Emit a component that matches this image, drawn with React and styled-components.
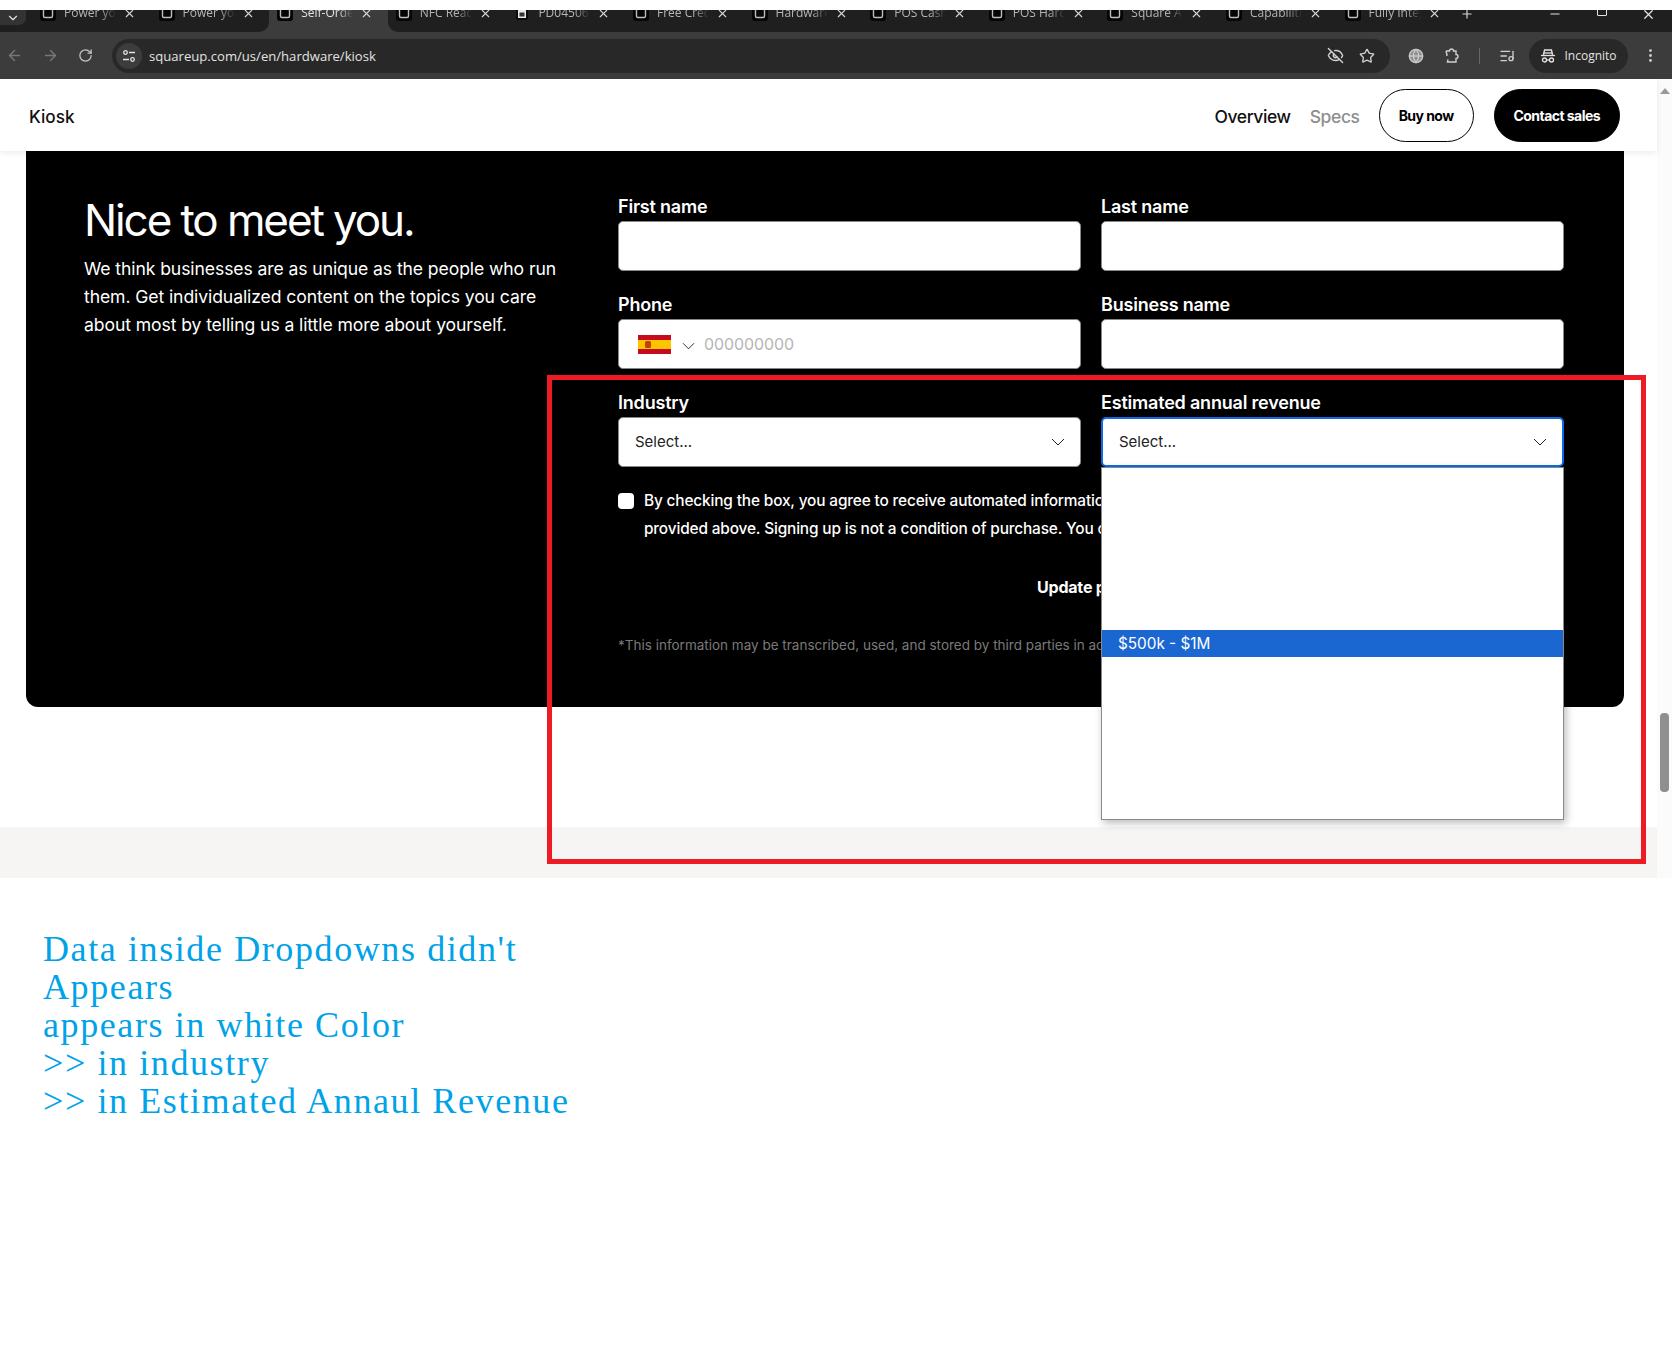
import styled, { createGlobalStyle } from 'styled-components';
import { ArrowLeft, ArrowRight, RotateCw, EyeOff, Star, X, Minus, Plus, EllipsisVertical, ChevronDown, ListMusic, Globe } from 'lucide-react';

const TABS = [
  'Power your',
  'Power your',
  'Self-Ordering',
  'NFC Reader',
  'PD04506_rev',
  'Free Credit',
  'Hardware',
  'POS Cash',
  'POS Hardware',
  'Square App',
  'Capabilities',
  'Fully Integrated',
];
const ACTIVE_TAB = 2;
const OPTION_ROWS = 13;
const HIGHLIGHTED_ROW = 6;

const GlobalStyle = createGlobalStyle`
  html, body {
    margin: 0;
    padding: 0;
    background: #fff;
  }
  body {
    font-family: Inter, "Liberation Sans", sans-serif;
  }
  * {
    box-sizing: border-box;
  }
`;

function Chevron({ width = 14 }) {
  return (
    <svg width={width} height="8" viewBox="0 0 14 8" fill="none" stroke="#222" strokeWidth="1">
      <path d="M1 1l6 6 6-6" />
    </svg>
  );
}

function SquareLogo() {
  return (
    <svg width="16" height="16" viewBox="0 0 16 16">
      <rect width="16" height="16" rx="3" fill="#050505" />
      <rect x="3.5" y="3.5" width="9" height="9" rx="1.5" fill="none" stroke="#bdbdbd" strokeWidth="1.4" />
    </svg>
  );
}

function DocIcon() {
  return (
    <svg width="16" height="16" viewBox="0 0 16 16">
      <rect x="2" width="12" height="15" rx="2" fill="#0a0a0a" />
      <rect x="4" y="2" width="8" height="11" fill="#e8e8e8" />
      <rect x="5.500" y="7.500" width="5" height="4" fill="#333" />
    </svg>
  );
}

function SiteSliders() {
  return (
    <svg width="14" height="14" viewBox="0 0 14 14" fill="none" stroke="#e3e3e3" strokeWidth="1.3">
      <circle cx="3.5" cy="3.5" r="1.8" />
      <path d="M7 3.5h6M1 10.5h6" />
      <circle cx="10.5" cy="10.5" r="1.8" />
    </svg>
  );
}

function ExtensionIcon() {
  return (
    <svg width="18" height="18" viewBox="0 0 18 18" fill="none" stroke="#d0d0d0" strokeWidth="1.4">
      <path d="M3 4h3.5a2 2 0 0 1 4 0H13v3.5a2 2 0 0 1 0 4V15H4.500l.5-2.500" />
      <path d="M3 4l1 4-1 0" />
    </svg>
  );
}

function IncognitoIcon() {
  return (
    <svg width="16" height="16" viewBox="0 0 16 16" fill="none" stroke="#e3e3e3" strokeWidth="1.3">
      <path d="M3.500 7l1-5h7l1 5" />
      <path d="M1 7.500h14" />
      <path d="M3.500 5h9" />
      <circle cx="4.500" cy="12" r="2" />
      <circle cx="11.500" cy="12" r="2" />
      <path d="M6.500 12h3" />
    </svg>
  );
}

function SpainFlag() {
  return (
    <svg width="33" height="19" viewBox="0 0 33 19">
      <rect width="33" height="19" fill="#c60b1e" />
      <rect y="5" width="33" height="9" fill="#ffc400" />
      <rect x="7" y="6" width="6" height="7" rx="1.5" fill="#ad1519" opacity="0.75" />
    </svg>
  );
}

export default function App() {
  return (
    <Root>
      <GlobalStyle />
      <Browser>
        <TabStrip>
          <TabMenuSlot>
            <TabMenu>
              <ChevronDown size={14} color="#e3e3e3" />
            </TabMenu>
          </TabMenuSlot>
          {TABS.map((title, i) => (
            <Tab
              key={i}
              $active={i === ACTIVE_TAB}
              $roundRight={i === ACTIVE_TAB - 1}
              $roundLeft={i === ACTIVE_TAB + 1}
            >
              {i === 4 ? <DocIcon /> : <SquareLogo />}
              <TabTitle>{title}</TabTitle>
              <X size={13} color="#d8d8d8" />
            </Tab>
          ))}
          <TabRest>
            <Plus size={14} color="#d8d8d8" />
            <WindowControls>
              <Minus size={14} color="#e3e3e3" />
              <RestoreBox />
              <X size={15} color="#e3e3e3" />
            </WindowControls>
          </TabRest>
        </TabStrip>

        <Toolbar>
          <NavIcons>
            <ArrowLeft size={17} color="#777" />
            <ArrowRight size={17} color="#777" />
            <RotateCw size={15} color="#c7c7c7" />
          </NavIcons>
          <AddressBar>
            <SiteInfo>
              <SiteSliders />
            </SiteInfo>
            <UrlText>squareup.com/us/en/hardware/kiosk</UrlText>
            <AddressIcons>
              <EyeOff size={17} color="#d0d0d0" />
              <Star size={16} color="#d0d0d0" />
            </AddressIcons>
          </AddressBar>
          <ToolIcons>
            <Globe size={16} color="#c9c9c9" fill="#8f8f8f" />
            <ExtensionIcon />
            <ToolDivider />
            <ListMusic size={16} color="#d0d0d0" />
          </ToolIcons>
          <IncognitoPill>
            <IncognitoIcon />
            Incognito
          </IncognitoPill>
          <MenuSlot>
            <EllipsisVertical size={17} color="#d0d0d0" />
          </MenuSlot>
        </Toolbar>

        <PageView>
          <PageContent>
            <NavBar>
              <ProductName>Kiosk</ProductName>
              <NavRight>
                <NavLink>Overview</NavLink>
                <NavLink $muted>Specs</NavLink>
                <PillButton>Buy now</PillButton>
                <PillButton $dark>Contact sales</PillButton>
              </NavRight>
            </NavBar>

            <Card>
              <Intro>
                <Heading>Nice to meet you.</Heading>
                <IntroText>
                  We think businesses are as unique as the people who run them. Get individualized content on the
                  topics you care about most by telling us a little more about yourself.
                </IntroText>
              </Intro>
              <Form>
                <Field>
                  <Label>First name</Label>
                  <InputBox />
                </Field>
                <Field>
                  <Label>Last name</Label>
                  <InputBox />
                </Field>
                <Field>
                  <Label>Phone</Label>
                  <InputBox>
                    <SpainFlag />
                    <PhoneChevron>
                      <Chevron width={13} />
                    </PhoneChevron>
                    <Placeholder>000000000</Placeholder>
                  </InputBox>
                </Field>
                <Field>
                  <Label>Business name</Label>
                  <InputBox />
                </Field>
                <Field>
                  <Label>Industry</Label>
                  <SelectBox>
                    Select...
                    <Chevron />
                  </SelectBox>
                </Field>
                <Field>
                  <Label>Estimated annual revenue</Label>
                  <SelectBox $focused>
                    Select...
                    <Chevron />
                    <OptionList>
                      {Array.from({ length: OPTION_ROWS }).map((_, i) => (
                        <OptionRow key={i} $highlighted={i === HIGHLIGHTED_ROW}>
                          {i === HIGHLIGHTED_ROW ? '$500k - $1M' : ''}
                        </OptionRow>
                      ))}
                    </OptionList>
                  </SelectBox>
                </Field>
                <ConsentRow>
                  <FakeCheckbox />
                  <ConsentText>
                    By checking the box, you agree to receive automated information from Square at the contact
                    <br />
                    provided above. Signing up is not a condition of purchase. You can opt out at any time.
                  </ConsentText>
                </ConsentRow>
                <UpdateRow>Update preferences</UpdateRow>
                <FinePrint>
                  *This information may be transcribed, used, and stored by third parties in accordance with our
                  Privacy Policy.
                </FinePrint>
              </Form>
            </Card>

            <CardGap />
            <GreyBand />
          </PageContent>
          <Scrollbar>
            <ScrollUp />
            <ScrollThumb />
          </Scrollbar>
        </PageView>
      </Browser>

      <Annotation>
        Data inside Dropdowns didn't
        <br />
        Appears
        <br />
        appears in white Color
        <br />
        &gt;&gt; in industry
        <br />
        &gt;&gt; in Estimated Annaul Revenue
      </Annotation>

      <RedFrame />
    </Root>
  );
}

const Root = styled.div`
  position: relative;
  width: 1680px;
  height: 1346px;
  padding-top: 10px;
  overflow: hidden;
  background: #fff;
`;

const Browser = styled.div`
  width: 1672px;
`;

const TabStrip = styled.div`
  height: 22px;
  display: flex;
  background: #3c3c3c;
  overflow: hidden;
`;

const TabMenuSlot = styled.div`
  width: 32px;
  background: #1f1f1f;
`;

const TabMenu = styled.div`
  width: 26px;
  height: 15px;
  background: #333;
  border-radius: 0 0 7px 0;
  display: flex;
  align-items: center;
  justify-content: center;
`;

const Tab = styled.div`
  width: 118.6px;
  height: 22px;
  flex: none;
  padding: 0 10px 0 8px;
  display: flex;
  align-items: flex-start;
  gap: 8px;
  background: ${(p) => (p.$active ? '#3c3c3c' : '#1f1f1f')};
  border-bottom-right-radius: ${(p) => (p.$roundRight ? '10px' : '0')};
  border-bottom-left-radius: ${(p) => (p.$roundLeft ? '10px' : '0')};
  color: ${(p) => (p.$active ? '#e3e3e3' : '#b5b5b5')};

  svg {
    flex: none;
    margin-top: -5px;
  }
  svg:last-child {
    margin-top: -3px;
    margin-left: -1px;
  }
`;

const TabTitle = styled.span`
  width: 52px;
  margin-top: -5px;
  overflow: hidden;
  white-space: nowrap;
  font: 12px/16px "Open Sans", "Liberation Sans", sans-serif;
  mask-image: linear-gradient(to right, #000 70%, transparent 100%);
`;

const TabRest = styled.div`
  flex: 1;
  display: flex;
  align-items: flex-start;
  padding-left: 5px;
  background: #1f1f1f;

  & > svg {
    margin-top: -3px;
  }
`;

const WindowControls = styled.div`
  margin-left: auto;
  width: 108px;
  margin-right: 16px;
  display: flex;
  justify-content: space-between;
  align-items: flex-start;

  svg {
    margin-top: -3px;
  }
`;

const RestoreBox = styled.div`
  width: 10px;
  height: 10px;
  margin-top: -4px;
  border: 1px solid #e3e3e3;
  border-radius: 1px;
`;

const Toolbar = styled.div`
  height: 47px;
  display: flex;
  align-items: center;
  background: #3c3c3c;
`;

const NavIcons = styled.div`
  width: 112px;
  padding: 0 19px 0 6px;
  display: flex;
  align-items: center;
  justify-content: space-between;
`;

const AddressBar = styled.div`
  width: 1278px;
  height: 34px;
  padding: 0 15px 0 4px;
  display: flex;
  align-items: center;
  border-radius: 17px;
  background: #282828;
`;

const SiteInfo = styled.div`
  width: 26px;
  height: 26px;
  display: flex;
  align-items: center;
  justify-content: center;
  border-radius: 50%;
  background: #3c3c3c;
`;

const UrlText = styled.span`
  margin-left: 7px;
  color: #e3e3e3;
  font: 13.1px "Open Sans", "Liberation Sans", sans-serif;
`;

const AddressIcons = styled.div`
  margin-left: auto;
  display: flex;
  align-items: center;
  gap: 15px;
`;

const ToolIcons = styled.div`
  width: 139px;
  padding: 0 14px 0 18px;
  display: flex;
  align-items: center;
  justify-content: space-between;
`;

const ToolDivider = styled.div`
  width: 1px;
  height: 16px;
  background: #666;
`;

const IncognitoPill = styled.div`
  width: 99px;
  height: 34px;
  display: flex;
  align-items: center;
  justify-content: center;
  gap: 8px;
  border-radius: 17px;
  background: #282828;
  color: #e3e3e3;
  font: 12px "Open Sans", "Liberation Sans", sans-serif;
`;

const MenuSlot = styled.div`
  width: 44px;
  display: flex;
  justify-content: center;
`;

const PageView = styled.div`
  height: 799px;
  display: flex;
`;

const PageContent = styled.div`
  width: 1657px;
  display: flex;
  flex-direction: column;
`;

const NavBar = styled.div`
  position: relative;
  z-index: 1;
  height: 72px;
  padding: 0 37px 0 29px;
  display: flex;
  align-items: center;
  justify-content: space-between;
  background: #fff;
  box-shadow: 0 2px 6px rgba(0, 0, 0, 0.08);
`;

const ProductName = styled.span`
  margin-top: 2px;
  font-size: 17.2px;
  font-weight: 500;
  color: #111;
`;

const NavRight = styled.div`
  display: flex;
  align-items: center;
  gap: 19px;
`;

const NavLink = styled.span`
  margin-top: 2px;
  font-size: 17.5px;
  font-weight: 500;
  letter-spacing: -0.4px;
  color: ${(p) => (p.$muted ? '#8e8e8e' : '#111')};
`;

const PillButton = styled.div`
  height: 53px;
  padding: 0 19px;
  margin-left: ${(p) => (p.$dark ? '1px' : '0')};
  display: flex;
  align-items: center;
  border-radius: 27px;
  border: 1px solid #000;
  background: ${(p) => (p.$dark ? '#000' : '#fff')};
  color: ${(p) => (p.$dark ? '#fff' : '#000')};
  font-size: 14px;
  font-weight: 700;
  letter-spacing: -0.55px;
`;

const Card = styled.div`
  position: relative;
  height: 556px;
  margin: 0 33px 0 26px;
  padding: 46px 60px 0 58px;
  display: flex;
  border-radius: 0 0 12px 12px;
  background: #000;
  color: #fff;
`;

const Intro = styled.div`
  width: 534px;
  flex: none;
`;

const Heading = styled.h1`
  margin: -5px 0 0;
  font-size: 44px;
  line-height: 56px;
  font-weight: 400;
  letter-spacing: -2.1px;
`;

const IntroText = styled.p`
  margin: 7px 0 0;
  width: 475px;
  font-size: 17.6px;
  line-height: 28px;
  letter-spacing: -0.1px;
`;

const Form = styled.div`
  width: 946px;
  display: grid;
  grid-template-columns: 463px 463px;
  column-gap: 20px;
  row-gap: 24px;
  align-content: start;
`;

const Field = styled.div`
  display: flex;
  flex-direction: column;
  gap: 4px;
`;

const Label = styled.label`
  font-size: 18px;
  line-height: 20px;
  font-weight: 600;
  letter-spacing: -0.2px;
`;

const InputBox = styled.div`
  height: 50px;
  padding-left: 19px;
  display: flex;
  align-items: center;
  border: 1px solid #888;
  border-radius: 5px;
  background: #fff;
`;

const PhoneChevron = styled.span`
  display: flex;
  margin: 4px 9px 0 11px;
`;

const Placeholder = styled.span`
  margin-top: -1px;
  font-size: 16px;
  letter-spacing: -0.1px;
  color: #b5b5b5;
`;

const SelectBox = styled.div`
  position: relative;
  height: 50px;
  padding: 0 15px 1px 16px;
  display: flex;
  align-items: center;
  justify-content: space-between;
  border: ${(p) => (p.$focused ? '2px solid #0b6ce6' : '1px solid #888')};
  border-radius: 5px;
  background: #fff;
  color: #222;
  font-size: 15px;
`;

const OptionList = styled.div`
  position: absolute;
  z-index: 2;
  top: calc(100% + 2px);
  left: -2px;
  right: -2px;
  height: 353px;
  border: 1px solid #8a8a8a;
  background: #fff;
  box-shadow: 2px 3px 8px rgba(0, 0, 0, 0.28);
`;

const OptionRow = styled.div`
  height: 27px;
  padding-left: 16px;
  display: flex;
  align-items: center;
  background: ${(p) => (p.$highlighted ? '#1a67d2' : 'transparent')};
  color: #fff;
  font-size: 15.3px;
`;

const ConsentRow = styled.div`
  grid-column: 1 / -1;
  margin-top: -4px;
  display: flex;
  gap: 10px;
`;

const FakeCheckbox = styled.div`
  width: 16px;
  height: 16px;
  margin-top: 6px;
  flex: none;
  border-radius: 4px;
  background: #fff;
`;

const ConsentText = styled.p`
  margin: 0;
  font-size: 15.4px;
  line-height: 28px;
  font-weight: 500;
  letter-spacing: -0.15px;
  white-space: nowrap;
`;

const UpdateRow = styled.div`
  grid-column: 1 / -1;
  margin-top: 6px;
  padding-left: 419px;
  font-size: 16px;
  line-height: 28px;
  font-weight: 700;
  letter-spacing: -0.2px;
`;

const FinePrint = styled.p`
  grid-column: 1 / -1;
  margin: 10px 0 0;
  color: #7a7a7a;
  font-size: 13.5px;
  line-height: 20px;
  white-space: nowrap;
`;

const CardGap = styled.div`
  height: 120px;
  background: #fff;
`;

const GreyBand = styled.div`
  height: 51px;
  background: #f6f5f3;
`;

const Scrollbar = styled.div`
  width: 15px;
  padding: 9px 0 0 3px;
  display: flex;
  flex-direction: column;
  background: #fbfbfb;
`;

const ScrollUp = styled.div`
  width: 0;
  height: 0;
  border-left: 5px solid transparent;
  border-right: 5px solid transparent;
  border-bottom: 6px solid #9a9a9a;
`;

const ScrollThumb = styled.div`
  width: 9px;
  height: 79px;
  margin-top: 619px;
  border-radius: 4px;
  background: #8f8f8f;
`;

const Annotation = styled.div`
  padding: 52px 0 0 43px;
  color: #00a2e8;
  font-family: "Liberation Serif", serif;
  font-size: 36px;
  line-height: 38px;
  letter-spacing: 1.6px;
`;

const RedFrame = styled.div`
  position: absolute;
  z-index: 3;
  top: 375px;
  left: 547px;
  width: 1099px;
  height: 489px;
  border: 5px solid #ed1c24;
  pointer-events: none;
`;
